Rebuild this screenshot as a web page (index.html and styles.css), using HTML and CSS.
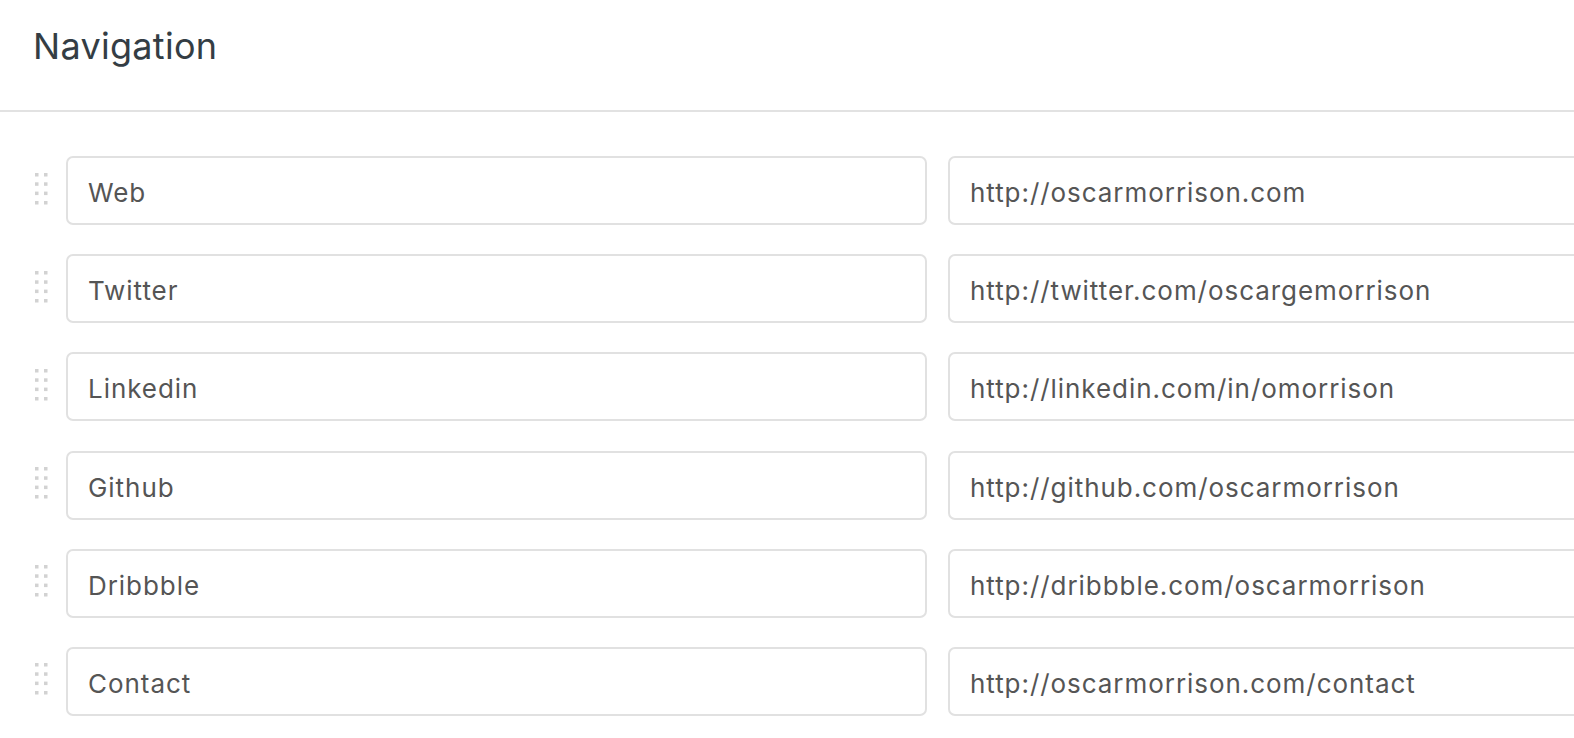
FILE: index.html
```html
<!DOCTYPE html>
<html>
<head>
<meta charset="utf-8">
<link rel="stylesheet" href="styles.css">
</head>
<body>
<header class="header">
  <h1 class="title">Navigation</h1>
</header>
<main class="list">
  <div class="row">
    <svg class="handle" width="13" height="32" viewBox="0 0 13 32"><g fill="#d2d2d2"><rect x="0" y="0" width="3.5" height="3.5"/><rect x="9" y="0" width="3.5" height="3.5"/><rect x="0" y="9.3" width="3.5" height="3.5"/><rect x="9" y="9.3" width="3.5" height="3.5"/><rect x="0" y="18.6" width="3.5" height="3.5"/><rect x="9" y="18.6" width="3.5" height="3.5"/><rect x="0" y="28" width="3.5" height="3.5"/><rect x="9" y="28" width="3.5" height="3.5"/></g></svg>
    <input class="field" type="text" value="Web">
    <input class="field" type="text" value="http://oscarmorrison.com">
  </div>
  <div class="row">
    <svg class="handle" width="13" height="32" viewBox="0 0 13 32"><g fill="#d2d2d2"><rect x="0" y="0" width="3.5" height="3.5"/><rect x="9" y="0" width="3.5" height="3.5"/><rect x="0" y="9.3" width="3.5" height="3.5"/><rect x="9" y="9.3" width="3.5" height="3.5"/><rect x="0" y="18.6" width="3.5" height="3.5"/><rect x="9" y="18.6" width="3.5" height="3.5"/><rect x="0" y="28" width="3.5" height="3.5"/><rect x="9" y="28" width="3.5" height="3.5"/></g></svg>
    <input class="field" type="text" value="Twitter">
    <input class="field" type="text" value="http://twitter.com/oscargemorrison">
  </div>
  <div class="row">
    <svg class="handle" width="13" height="32" viewBox="0 0 13 32"><g fill="#d2d2d2"><rect x="0" y="0" width="3.5" height="3.5"/><rect x="9" y="0" width="3.5" height="3.5"/><rect x="0" y="9.3" width="3.5" height="3.5"/><rect x="9" y="9.3" width="3.5" height="3.5"/><rect x="0" y="18.6" width="3.5" height="3.5"/><rect x="9" y="18.6" width="3.5" height="3.5"/><rect x="0" y="28" width="3.5" height="3.5"/><rect x="9" y="28" width="3.5" height="3.5"/></g></svg>
    <input class="field" type="text" value="Linkedin">
    <input class="field" type="text" value="http://linkedin.com/in/omorrison">
  </div>
  <div class="row">
    <svg class="handle" width="13" height="32" viewBox="0 0 13 32"><g fill="#d2d2d2"><rect x="0" y="0" width="3.5" height="3.5"/><rect x="9" y="0" width="3.5" height="3.5"/><rect x="0" y="9.3" width="3.5" height="3.5"/><rect x="9" y="9.3" width="3.5" height="3.5"/><rect x="0" y="18.6" width="3.5" height="3.5"/><rect x="9" y="18.6" width="3.5" height="3.5"/><rect x="0" y="28" width="3.5" height="3.5"/><rect x="9" y="28" width="3.5" height="3.5"/></g></svg>
    <input class="field" type="text" value="Github">
    <input class="field" type="text" value="http://github.com/oscarmorrison">
  </div>
  <div class="row">
    <svg class="handle" width="13" height="32" viewBox="0 0 13 32"><g fill="#d2d2d2"><rect x="0" y="0" width="3.5" height="3.5"/><rect x="9" y="0" width="3.5" height="3.5"/><rect x="0" y="9.3" width="3.5" height="3.5"/><rect x="9" y="9.3" width="3.5" height="3.5"/><rect x="0" y="18.6" width="3.5" height="3.5"/><rect x="9" y="18.6" width="3.5" height="3.5"/><rect x="0" y="28" width="3.5" height="3.5"/><rect x="9" y="28" width="3.5" height="3.5"/></g></svg>
    <input class="field" type="text" value="Dribbble">
    <input class="field" type="text" value="http://dribbble.com/oscarmorrison">
  </div>
  <div class="row">
    <svg class="handle" width="13" height="32" viewBox="0 0 13 32"><g fill="#d2d2d2"><rect x="0" y="0" width="3.5" height="3.5"/><rect x="9" y="0" width="3.5" height="3.5"/><rect x="0" y="9.3" width="3.5" height="3.5"/><rect x="9" y="9.3" width="3.5" height="3.5"/><rect x="0" y="18.6" width="3.5" height="3.5"/><rect x="9" y="18.6" width="3.5" height="3.5"/><rect x="0" y="28" width="3.5" height="3.5"/><rect x="9" y="28" width="3.5" height="3.5"/></g></svg>
    <input class="field" type="text" value="Contact">
    <input class="field" type="text" value="http://oscarmorrison.com/contact">
  </div>
</main>
</body>
</html>
```

FILE: styles.css
```css
html, body {
  margin: 0;
  padding: 0;
  background: #ffffff;
  overflow: hidden;
}

body {
  font-family: Inter, "Liberation Sans", Arial, sans-serif;
  width: 1574px;
  height: 738px;
}

.header {
  box-sizing: border-box;
  height: 112px;
  border-bottom: 2px solid #e2e2e2;
  padding-left: 33px;
}

.title {
  margin: 0;
  padding-top: 28px;
  font-size: 36px;
  line-height: 36px;
  font-weight: 400;
  color: #343d44;
  letter-spacing: 0.3px;
}

.list {
  padding-top: 44px;
  display: flex;
  flex-direction: column;
  gap: 29.2px;
}

.row {
  display: flex;
  align-items: center;
  gap: 21px;
  padding-left: 35px;
}

.handle {
  flex: 0 0 auto;
  margin-right: -3px;
  margin-top: -4px;
}

.field {
  flex: 0 0 861px;
  width: 861px;
  height: 69px;
  box-sizing: border-box;
  border: 2px solid #e1e1e1;
  border-radius: 7px;
  padding: 4px 20px 0 20px;
  margin: 0;
  font-family: Inter, "Liberation Sans", Arial, sans-serif;
  font-size: 26px;
  letter-spacing: 0.95px;
  color: #555555;
  background: #ffffff;
  outline: none;
}
```
